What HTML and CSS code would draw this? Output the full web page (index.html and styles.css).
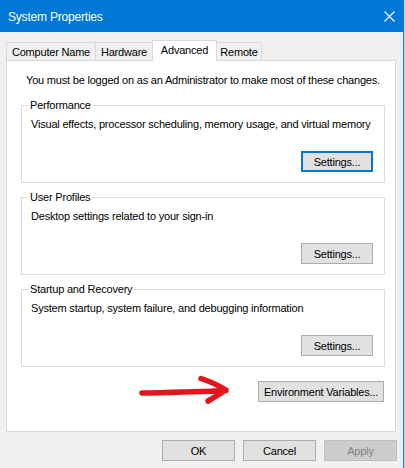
FILE: index.html
```html
<!DOCTYPE html>
<html lang="en">
<head>
<meta charset="utf-8">
<title>System Properties</title>
<link rel="stylesheet" href="styles.css">
</head>
<body>
<div class="window">
  <div class="titlebar">
    <span class="title">System Properties</span>
    <svg class="close" width="11" height="11" viewBox="0 0 11 11"><path d="M0.5 0.5 L10.5 10.5 M10.5 0.5 L0.5 10.5" stroke="#fff" stroke-width="1.1" fill="none"/></svg>
  </div>
  <div class="client">
    <div class="tabs">
      <div class="tab tab-name">Computer Name</div>
      <div class="tab tab-hw">Hardware</div>
      <div class="tab tab-adv active">Advanced</div>
      <div class="tab tab-remote">Remote</div>
    </div>
    <div class="panel">
      <p class="note">You must be logged on as an Administrator to make most of these changes.</p>
      <fieldset class="group">
        <legend>Performance</legend>
        <p class="desc">Visual effects, processor scheduling, memory usage, and virtual memory</p>
        <div class="actions"><button class="btn settings focused">Settings...</button></div>
      </fieldset>
      <fieldset class="group">
        <legend>User Profiles</legend>
        <p class="desc">Desktop settings related to your sign-in</p>
        <div class="actions"><button class="btn settings">Settings...</button></div>
      </fieldset>
      <fieldset class="group">
        <legend>Startup and Recovery</legend>
        <p class="desc">System startup, system failure, and debugging information</p>
        <div class="actions"><button class="btn settings">Settings...</button></div>
      </fieldset>
      <div class="env-row"><button class="btn env">Environment Variables...</button></div>
      <svg class="arrow" width="96" height="34" viewBox="0 0 96 34"><path d="M4 21 C30 20.5 60 20 88 18.5 M63 6.5 C72 9.5 80 13 88 18 C82 22 76 25.5 70 29" stroke="#e3161b" stroke-width="5.5" stroke-linecap="round" stroke-linejoin="round" fill="none"/></svg>
    </div>
    <div class="footer">
      <button class="btn dlg">OK</button>
      <button class="btn dlg">Cancel</button>
      <button class="btn dlg" disabled>Apply</button>
    </div>
  </div>
</div>
</body>
</html>
```
FILE: styles.css
```css
* { box-sizing: border-box; }
html, body { margin: 0; padding: 0; }
body {
  background: #cfcfcf;
  font-family: "Liberation Sans", Arial, sans-serif;
  font-size: 11px;
  letter-spacing: -0.2px;
  line-height: 14px;
  color: #000;
  width: 406px;
  height: 468px;
  overflow: hidden;
}
.window {
  width: 404px;
  height: 468px;
  border-right: 1px solid #1a7fd6;
  display: flex;
  flex-direction: column;
}
.titlebar {
  height: 32px;
  background: #0078d7;
  display: flex;
  align-items: center;
  justify-content: space-between;
  padding: 1px 8px 0 8px;
}
.title {
  color: #fff;
  font-size: 12px;
  letter-spacing: -0.2px;
}
.close { display: block; }
.client {
  flex: 1;
  background: #f0f0f0;
  padding: 8px 6px 0 6px;
}
.tabs {
  display: flex;
  align-items: flex-end;
  height: 20px;
}
.tab {
  height: 18px;
  border: 1px solid #d9d9d9;
  border-bottom: none;
  margin-left: -1px;
  padding: 2px 0 0 0;
  background: #f0f0f0;
  white-space: nowrap;
  text-align: center;
}
.tab:first-child { margin-left: 0; }
.tab-name { width: 90px; }
.tab-hw { width: 58px; }
.tab-adv { width: 65px; }
.tab-remote { width: 46px; }
.tab.active {
  height: 21px;
  margin-bottom: -1px;
  background: #fff;
  padding-top: 2px;
  position: relative;
  z-index: 2;
}
.panel {
  position: relative;
  width: 390px;
  height: 372px;
  background: #fff;
  border: 1px solid #d9d9d9;
  padding: 12px 10px 0 14px;
}
.note {
  margin: 0;
  padding-left: 5px;
  white-space: nowrap;
}
.group {
  margin: 11px 0 0 0;
  border: 1px solid #dcdcdc;
  padding: 5px 11px 10px 9px;
  min-width: 0;
}
.group + .group { margin-top: 7px; }
.group legend {
  padding: 0 2px;
  margin-left: -3px;
}
.desc { margin: 0; white-space: nowrap; }
.actions {
  display: flex;
  justify-content: flex-end;
  margin-top: 20px;
}
.btn {
  font-family: "Liberation Sans", Arial, sans-serif;
  font-size: 11px;
  letter-spacing: -0.2px;
  line-height: 14px;
  color: #000;
  height: 21px;
  background: #e1e1e1;
  border: 1px solid #adadad;
  border-radius: 0;
  padding: 0;
  margin: 0;
  white-space: nowrap;
}
.btn.focused { border: 2px solid #0078d7; }
.settings { width: 72px; }
.env-row {
  display: flex;
  justify-content: flex-end;
  margin-top: 14px;
  padding-right: 1px;
}
.env { width: 126px; }
.arrow {
  position: absolute;
  left: 131px;
  top: 311px;
}
.footer {
  display: flex;
  justify-content: flex-end;
  gap: 8px;
  margin-top: 8px;
}
.dlg { width: 73px; }
.btn:disabled {
  background: #cccccc;
  border-color: #bfbfbf;
  color: #838383;
}
```
